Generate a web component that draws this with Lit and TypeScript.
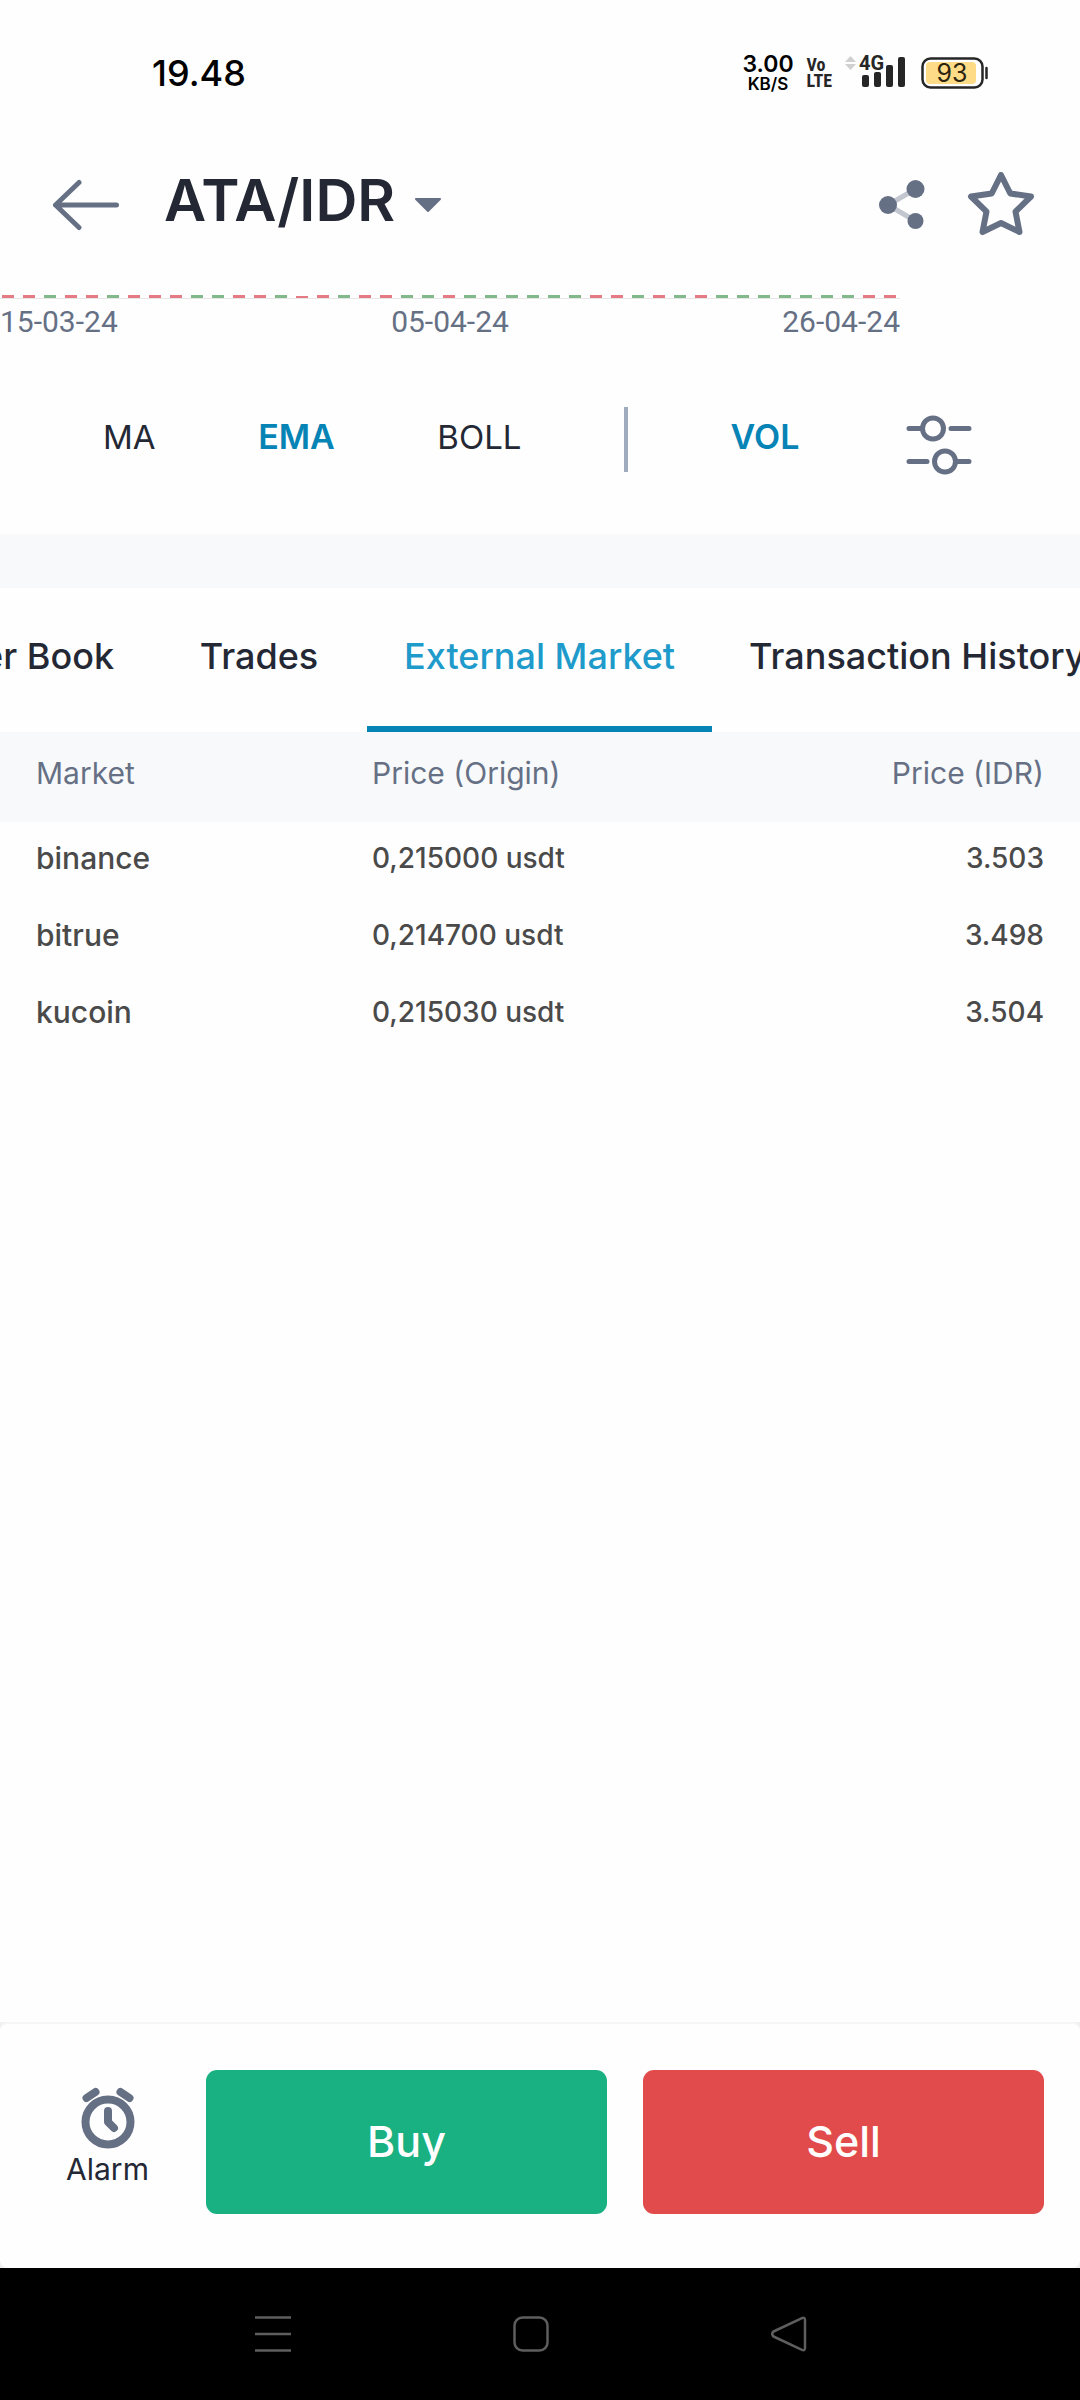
import { LitElement, html, css, svg } from "lit";
import { customElement, state } from "lit/decorators.js";
import { classMap } from "lit/directives/class-map.js";

type Candle = "r" | "g" | "f";

// One letter per day: r = falling, g = rising, f = flat.
const CANDLES = "rrgrrgrrrggrrgfrgrrggrgggg" + "ggrrgrgrgggggggrr";

const QUOTES = [
  { market: "binance", origin: "0,215000 usdt", idr: "3.503" },
  { market: "bitrue", origin: "0,214700 usdt", idr: "3.498" },
  { market: "kucoin", origin: "0,215030 usdt", idr: "3.504" },
];

const TABS = ["Order Book", "Trades", "External Market", "Transaction History"];

const reset = css`
  :host {
    display: block;
  }
  button {
    margin: 0;
    padding: 0;
    border: 0;
    background: none;
    color: inherit;
    font: inherit;
    white-space: nowrap;
    cursor: pointer;
  }
  svg {
    display: block;
  }
`;

@customElement("status-bar")
class StatusBar extends LitElement {
  static styles = [
    reset,
    css`
      .bar {
        display: flex;
        align-items: center;
        justify-content: space-between;
        height: 146px;
        box-sizing: border-box;
        padding: 0 92px 0 152px;
        color: #000;
      }
      .time {
        font-size: 36px;
        font-weight: 500;
      }
      .icons {
        display: flex;
        align-items: center;
      }
      .speed {
        display: flex;
        flex-direction: column;
        align-items: center;
        margin-right: 13px;
        font-weight: 600;
      }
      .rate {
        font-size: 23px;
        line-height: 22px;
      }
      .unit {
        font-size: 17px;
        line-height: 18px;
      }
      .volte {
        display: flex;
        flex-direction: column;
        margin-right: 13px;
        color: #262626;
        font-family: "Liberation Sans Narrow", "Roboto Condensed", Roboto, sans-serif;
        font-size: 18px;
        font-weight: 700;
        line-height: 16px;
      }
      .signal {
        margin-right: 16px;
      }
      .network {
        font-family: "Liberation Sans Narrow", Roboto, sans-serif;
        font-size: 20px;
        font-weight: 700;
      }
      .level {
        font-size: 25px;
        font-weight: 400;
      }
    `,
  ];

  render() {
    return html`
      <div class="bar">
        <span class="time">19.48</span>
        <div class="icons">
          <div class="speed"><span class="rate">3.00</span><span class="unit">KB/S</span></div>
          <div class="volte"><span>Vo</span><span>LTE</span></div>
          <svg class="signal" width="60" height="42" viewBox="0 -4 60 42" fill="#262626">
            <path d="M0 6l5.500-6 5.500 6zM0 8h11l-5.500 6z" fill="#d0d0d0" />
            <text class="network" x="14" y="14">4G</text>
            <rect x="17" y="19" width="7" height="12" rx="2" />
            <rect x="29" y="16" width="7" height="15" rx="2" />
            <rect x="41" y="9" width="7" height="22" rx="2" />
            <rect x="53" y="1" width="7" height="30" rx="2" />
          </svg>
          <svg width="67" height="32" viewBox="0 0 67 32">
            <rect x="1.500" y="1.500" width="60" height="29" rx="8" fill="none" stroke="#262626" stroke-width="2.500" />
            <rect x="5" y="5" width="50" height="22" rx="4" fill="#fedb86" />
            <path d="M65.500 11v10" stroke="#262626" stroke-width="2.500" stroke-linecap="round" />
            <text class="level" x="31" y="25" text-anchor="middle" fill="#2b2410">93</text>
          </svg>
        </div>
      </div>
    `;
  }
}

@customElement("pair-header")
class PairHeader extends LitElement {
  static styles = [
    reset,
    css`
      .header {
        display: flex;
        align-items: center;
        height: 118px;
        box-sizing: border-box;
        padding: 0 45px 0 52px;
        color: #667085;
      }
      .pair {
        display: flex;
        align-items: center;
        gap: 20px;
        margin: 0 auto 0 44px;
      }
      .title {
        margin: 0;
        padding-bottom: 10px;
        color: #242834;
        font-size: 58px;
        font-weight: 600;
        line-height: 64px;
      }
      .actions {
        display: flex;
        align-items: center;
        gap: 42px;
      }
    `,
  ];

  render() {
    return html`
      <header class="header">
        <button aria-label="Back">
          <svg width="68" height="52" viewBox="0 0 68 52" fill="none" stroke="currentColor" stroke-width="5" stroke-linecap="round" stroke-linejoin="round">
            <path d="M64.500 26H3.500M27 3.500L3.500 26l23.500 22.500" />
          </svg>
        </button>
        <div class="pair">
          <h1 class="title">ATA/IDR</h1>
          <button aria-label="Choose pair">
            <svg width="26" height="16" viewBox="0 0 26 16" fill="currentColor" stroke="currentColor" stroke-width="2" stroke-linejoin="round">
              <path d="M1 2h24L13 14z" />
            </svg>
          </button>
        </div>
        <div class="actions">
          <button aria-label="Share">
            <svg width="46" height="50" viewBox="0 0 46 50" fill="currentColor">
              <path d="M36.500 9L9 25l27.500 16" fill="none" stroke="#c1c6cf" stroke-width="5" />
              <circle cx="36.500" cy="9" r="9" />
              <circle cx="9" cy="25" r="9" />
              <circle cx="36.500" cy="41" r="8" />
            </svg>
          </button>
          <button aria-label="Add to favourites">
            <svg width="68" height="66" viewBox="0 0 68 66" fill="none" stroke="currentColor" stroke-width="6" stroke-linejoin="round">
              <path d="M34 3L43.300 21.500L64 24.500L48.500 39.700L52.500 60L34 51L15.500 60L19.500 39.700L4 24.500L24.700 21.500Z" />
            </svg>
          </button>
        </div>
      </header>
    `;
  }
}

@customElement("chart-panel")
class ChartPanel extends LitElement {
  static styles = [
    reset,
    css`
      .plot {
        width: calc(100% / 6 * 5);
        padding-top: 30px;
      }
      .candles {
        display: flex;
        justify-content: space-between;
        align-items: flex-end;
        height: 4px;
        padding: 0 4px 0 2px;
        border-bottom: 1px solid #e6e6e6;
      }
      .candle {
        width: 12px;
        height: 3px;
      }
      .r {
        background: #e67a84;
      }
      .g {
        background: #82b98a;
      }
      .f {
        height: 2px;
        background: #e67a84;
      }
      .dates {
        display: flex;
        justify-content: space-between;
        padding-top: 5px;
        color: #667085;
        font-family: Roboto, sans-serif;
        font-size: 30px;
        line-height: 36px;
      }
      .indicators {
        display: flex;
        align-items: center;
        justify-content: space-between;
        padding: 64px 108px 59px 103px;
        color: #242834;
        font-size: 33px;
        line-height: 40px;
      }
      .indicator {
        padding-bottom: 6px;
      }
      .on {
        color: #0684b5;
        font-size: 34px;
        font-weight: 600;
      }
      .divider {
        width: 4px;
        height: 65px;
        background: #a0abbd;
      }
      .settings {
        padding: 11px 0 0 4px;
      }
    `,
  ];

  @state() private active = new Set(["EMA", "VOL"]);

  private toggle(name: string) {
    const next = new Set(this.active);
    next.has(name) ? next.delete(name) : next.add(name);
    this.active = next;
  }

  private indicator(name: string) {
    const on = this.active.has(name);
    return html`<button class=${classMap({ indicator: true, on })} aria-pressed=${on} @click=${() => this.toggle(name)}>${name}</button>`;
  }

  render() {
    return html`
      <div class="plot">
        <div class="candles">${[...CANDLES].map((c) => html`<span class="candle ${c as Candle}"></span>`)}</div>
        <div class="dates"><span>15-03-24</span><span>05-04-24</span><span>26-04-24</span></div>
      </div>
      <div class="indicators">
        ${["MA", "EMA", "BOLL"].map((n) => this.indicator(n))}
        <span class="divider"></span>
        ${this.indicator("VOL")}
        <button class="settings" aria-label="Indicator settings">
          <svg width="66" height="60" viewBox="0 0 66 60" fill="none" stroke="currentColor" stroke-width="5" stroke-linecap="round" color="#667085">
            <path d="M3 13.500h12M45 13.500h18M3 46.500h18M51 46.500h12" />
            <circle cx="27" cy="13.500" r="10.500" />
            <circle cx="39" cy="46.500" r="10.500" />
          </svg>
        </button>
      </div>
    `;
  }
}

@customElement("market-tabs")
class MarketTabs extends LitElement {
  static styles = [
    reset,
    css`
      .tabs {
        display: flex;
        overflow-x: auto;
        scrollbar-width: none;
        border-top: 54px solid #f8f9fb;
      }
      .tab {
        flex: none;
        min-width: 216px;
        height: 144px;
        padding: 0 37px 2px;
        border-bottom: 6px solid transparent;
        color: #242834;
        font-size: 36px;
        font-weight: 500;
      }
      .selected {
        border-bottom-color: #0684b5;
        color: #1e9bcb;
      }
    `,
  ];

  @state() private selected = "External Market";

  // Keeps the selected tab in the middle of the strip.
  async updated() {
    await document.fonts.ready;
    const strip = this.renderRoot.querySelector<HTMLElement>(".tabs")!;
    const tab = this.renderRoot.querySelector<HTMLElement>(".selected")!;
    strip.scrollLeft = tab.offsetLeft - strip.offsetLeft + tab.offsetWidth / 2 - strip.clientWidth / 2;
  }

  render() {
    return html`
      <div class="tabs" role="tablist">
        ${TABS.map(
          (t) => html`<button
            role="tab"
            class=${classMap({ tab: true, selected: t === this.selected })}
            aria-selected=${t === this.selected}
            @click=${() => (this.selected = t)}
          >${t}</button>`
        )}
      </div>
    `;
  }
}

@customElement("quote-table")
class QuoteTable extends LitElement {
  static styles = [
    reset,
    css`
      .quotes {
        width: 100%;
        border-collapse: collapse;
        table-layout: fixed;
        font-size: 28px;
        line-height: 40px;
        text-align: left;
      }
      .head {
        height: 90px;
        box-sizing: border-box;
        padding: 0 0 8px 12px;
        background: #f8f9fb;
        color: #667085;
        font-size: 30px;
        font-weight: 400;
      }
      .cell {
        height: 77px;
        box-sizing: border-box;
        padding: 0 0 6px 12px;
        color: #4a4a4a;
        font-weight: 500;
      }
      .name {
        font-size: 30px;
      }
      .first {
        padding-left: 36px;
      }
      .last {
        padding-right: 36px;
        text-align: right;
      }
    `,
  ];

  render() {
    return html`
      <table class="quotes">
        <thead>
          <tr>
            <th class="head first">Market</th>
            <th class="head">Price (Origin)</th>
            <th class="head last">Price (IDR)</th>
          </tr>
        </thead>
        <tbody>
          ${QUOTES.map(
            (q) => html`<tr>
              <td class="cell name first">${q.market}</td>
              <td class="cell">${q.origin}</td>
              <td class="cell last">${q.idr}</td>
            </tr>`
          )}
        </tbody>
      </table>
    `;
  }
}

@customElement("trade-bar")
class TradeBar extends LitElement {
  static styles = [
    reset,
    css`
      :host {
        background: #f0f0f0;
      }
      .bar {
        display: flex;
        align-items: center;
        gap: 36px;
        padding: 46px 36px 54px;
        border-top: 2px solid #f6f6f6;
        border-radius: 8px;
        background: #fefefe;
      }
      .alarm {
        display: flex;
        flex-direction: column;
        align-items: center;
        width: 134px;
        padding: 0 7px 8px 16px;
        box-sizing: border-box;
        color: #242834;
        font-size: 30px;
        line-height: 40px;
      }
      .trade {
        flex: 1;
        height: 144px;
        padding-bottom: 2px;
        border-radius: 11px;
        color: #fff;
        font-size: 43px;
        font-weight: 500;
      }
      .buy {
        background: #1ab182;
      }
      .sell {
        background: #e14b4b;
      }
    `,
  ];

  render() {
    return html`
      <div class="bar">
        <button class="alarm">
          <svg width="54" height="62" viewBox="0 0 54 62" fill="none" stroke="#667085" stroke-width="8" stroke-linecap="round" stroke-linejoin="round">
            <circle cx="27" cy="35" r="22.500" />
            <path d="M27 24v11l6 6M5.500 11l9-6M48.500 11l-9-6" />
          </svg>
          Alarm
        </button>
        <button class="trade buy">Buy</button>
        <button class="trade sell">Sell</button>
      </div>
    `;
  }
}

@customElement("system-nav")
class SystemNav extends LitElement {
  static styles = [
    reset,
    css`
      .nav {
        display: flex;
        align-items: center;
        justify-content: center;
        gap: 222px;
        height: 132px;
        box-sizing: border-box;
        padding-right: 18px;
        background: #000;
      }
    `,
  ];

  private icon(label: string, shape: unknown) {
    return html`<button aria-label=${label}>
      <svg width="36" height="36" viewBox="0 0 36 36" fill="none" stroke="#5e5e5e" stroke-width="2.500" stroke-linejoin="round">${shape}</svg>
    </button>`;
  }

  render() {
    return html`
      <nav class="nav">
        ${this.icon("Recent apps", svg`<path d="M0 1.500h36M0 18h36M0 34.500h36" />`)}
        ${this.icon("Home", svg`<rect x="1.500" y="1.500" width="33" height="33" rx="8" />`)}
        ${this.icon("Back", svg`<path d="M31 2.200L2.500 15.500Q0 18 2.500 20.500L31 33.800Q34 35 34 32V4Q34 1 31 2.200z" />`)}
      </nav>
    `;
  }
}

@customElement("app-root")
class AppRoot extends LitElement {
  static styles = css`
    :host {
      display: flex;
      flex-direction: column;
      min-height: 100vh;
      background: #fefefe;
      font-family: Inter, "Open Sans", sans-serif;
    }
    .content {
      flex: 1;
    }
  `;

  render() {
    return html`
      <status-bar></status-bar>
      <pair-header></pair-header>
      <main class="content">
        <chart-panel></chart-panel>
        <market-tabs></market-tabs>
        <quote-table></quote-table>
      </main>
      <trade-bar></trade-bar>
      <system-nav></system-nav>
    `;
  }
}
